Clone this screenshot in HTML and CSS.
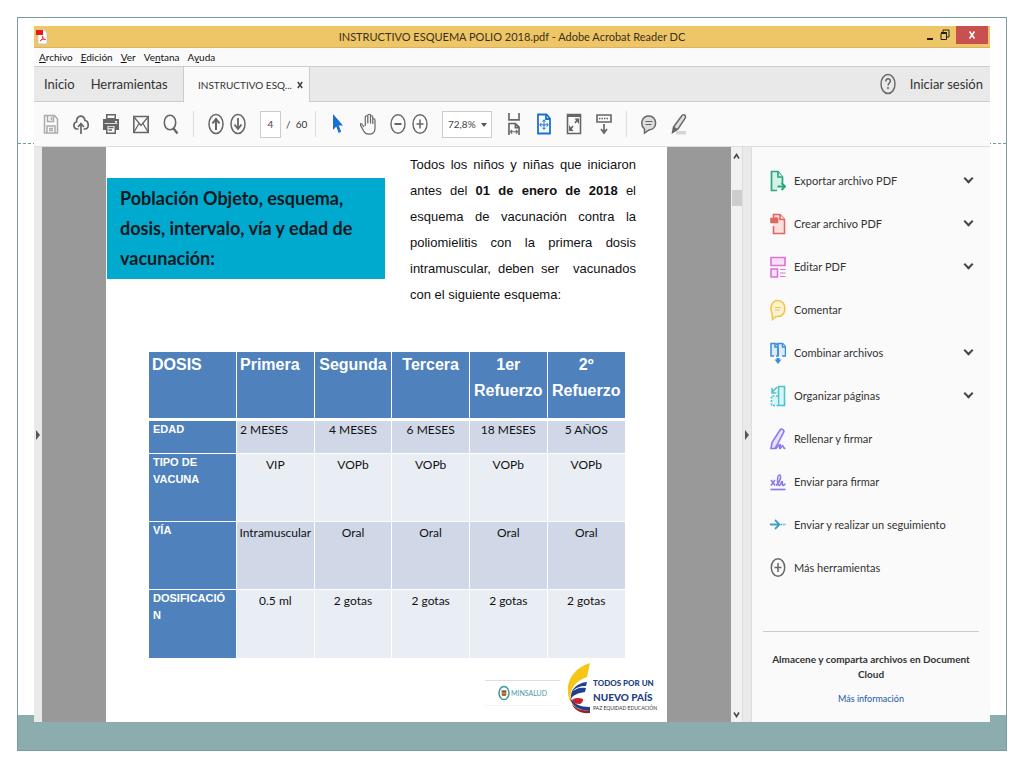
FILE: index.html
```html
<!DOCTYPE html>
<html lang="es">
  <head>
    <meta charset="UTF-8" />
    <meta name="viewport" content="width=device-width, initial-scale=1.0" />
    <title>INSTRUCTIVO ESQUEMA POLIO 2018.pdf - Adobe Acrobat Reader DC</title>
    <link rel="stylesheet" href="styles.css">
  </head>
  <body>
    <div class="slide">
      <div class="app">
        <header class="titlebar">
          <svg class="app-icon" width="12" height="16" viewBox="0 0 12 16">
            <path d="M2 1h7l2 3v11H2z" fill="#fff" stroke="#cfc6b8" stroke-width="1" />
            <path d="M0 1h7v5H0z" fill="#e21b1b" />
            <path d="M4 12c3-2 3-4 2.500-5M6.500 7c0 2 1 3.500 3 3.500M4 12c1-1.500 3-2 5.500-1.500" fill="none" stroke="#e23b3b" />
          </svg>
          <h1>INSTRUCTIVO ESQUEMA POLIO 2018.pdf - Adobe Acrobat Reader DC</h1>
          <div class="window-buttons">
            <button aria-label="Minimizar">
              <svg width="8" height="12" viewBox="0 0 8 12"><path d="M1 9h6v2H1z" fill="#222" /></svg>
            </button>
            <button aria-label="Restaurar">
              <svg width="10" height="12" viewBox="0 0 10 12"><path d="M3 3V1h6v7H7" fill="none" stroke="#222" /><path d="M1 4.500h5.500v6H1z" fill="none" stroke="#222" /><path d="M1 3h6v2H1z" fill="#222" /></svg>
            </button>
            <button class="close" aria-label="Cerrar">
              <svg width="8" height="10" viewBox="0 0 8 10"><path d="M1.500 1.500l5 7M6.500 1.500l-5 7" stroke="#fff" stroke-width="1.500" /></svg>
            </button>
          </div>
        </header>
        <nav class="menubar">
          <a href="#"><u>A</u>rchivo</a>
          <a href="#"><u>E</u>dición</a>
          <a href="#"><u>V</u>er</a>
          <a href="#">Ve<u>n</u>tana</a>
          <a href="#">A<u>y</u>uda</a>
        </nav>
        <div class="tabbar">
          <div class="tabs">
            <button>Inicio</button>
            <button>Herramientas</button>
          </div>
          <div class="doc-tab">
            <span>INSTRUCTIVO ESQ...</span>
            <button aria-label="Cerrar pestaña">
              <svg width="6" height="8" viewBox="0 0 6 8"><path d="M.8 1l4.400 6M5.200 1L.8 7" stroke="#444" stroke-width="1.500" /></svg>
            </button>
          </div>
          <div class="account">
            <button aria-label="Ayuda">
              <svg width="16" height="22" viewBox="0 0 16 22" fill="none" stroke="#666">
                <ellipse cx="8" cy="11" rx="7" ry="9.500" stroke-width="1.400" />
                <path d="M5.800 8.500c0-3.500 4.600-3.500 4.600-.5 0 2-2.300 2-2.300 4.500" stroke-width="1.500" />
                <path d="M8 14v2" stroke-width="1.600" />
              </svg>
            </button>
            <button class="login">Iniciar sesión</button>
          </div>
        </div>
        <div class="toolbar">
          <button aria-label="Guardar">
            <svg viewBox="0 0 16 22" fill="none" stroke="#aaa" stroke-width="1.500">
              <path d="M1.500 2.500h10l3 3.500v14h-13z" /><path d="M4.500 2.500v6h6v-6M4 20v-7h8v7M6 15.500h4M6 17.500h4" /><path d="M8.500 4v3" />
            </svg>
          </button>
          <button aria-label="Subir">
            <svg viewBox="0 0 16 22" fill="none" stroke="#666" stroke-width="1.700">
              <path d="M5.500 16H4C0 16 0 9.500 3.500 9 3.500 2 11 1 12 7.500c4 .5 4.500 8.500 0 8.500h-1.500" /><path d="M8 21v-10M5 14l3-3.500 3 3.500" />
            </svg>
          </button>
          <button aria-label="Imprimir">
            <svg viewBox="0 0 16 22" fill="#666">
              <path d="M3 1h10v5H3z" /><path d="M4.500 2.500h7V5h-7z" fill="#fafafa" /><path d="M0 6h16v11H0z" /><path d="M3 12h10v9H3z" /><path d="M4.500 13h7v6.500h-7z" fill="#fafafa" /><path d="M5.500 14.500h5M5.500 17h3.500" stroke="#666" stroke-width="1.300" /><path d="M1.500 10.500h13" stroke="#fafafa" stroke-width=".8" /><path d="M12 8h2v1.500h-2z" fill="#fff" />
            </svg>
          </button>
          <button aria-label="Correo">
            <svg viewBox="0 0 16 22" fill="none" stroke="#666" stroke-width="1.300">
              <path d="M.8 3.500h14.400v16H.8z" stroke-width="1.600" /><path d="M1 4l7 8.500L15 4M1 19l5-8.500M15 19l-5-8.500" />
            </svg>
          </button>
          <button aria-label="Buscar">
            <svg viewBox="0 0 16 22" fill="none" stroke="#666">
              <ellipse cx="7" cy="9.500" rx="5.700" ry="7.300" stroke-width="1.600" /><path d="M10.500 15.500l4 5" stroke-width="2.300" />
            </svg>
          </button>
          <i class="sep"></i>
          <div class="pair">
            <button aria-label="Página anterior">
              <svg viewBox="0 0 16 22" fill="none" stroke="#666"><ellipse cx="8" cy="11" rx="7" ry="9.500" stroke-width="1.500" /><path d="M8 17V6M4.500 10.500L8 6l3.500 4.500" stroke-width="2" /></svg>
            </button>
            <button aria-label="Página siguiente">
              <svg viewBox="0 0 16 22" fill="none" stroke="#666"><ellipse cx="8" cy="11" rx="7" ry="9.500" stroke-width="1.500" /><path d="M8 5v11M4.500 11.500L8 16l3.500-4.500" stroke-width="1.800" /></svg>
            </button>
          </div>
          <label class="page-box"><input type="text" value="4" aria-label="Página" /> / &nbsp;60</label>
          <i class="sep"></i>
          <button aria-label="Seleccionar">
            <svg viewBox="0 0 16 22"><path d="M3 1v16l3.300-3.500 2.400 6.500 2.500-1.200L8.700 12.500H13z" fill="#1a6fd6" /></svg>
          </button>
          <button aria-label="Mano">
            <svg viewBox="0 0 16 22" fill="none" stroke="#666" stroke-width="1.200">
              <path d="M4 14L1.800 11c-.8-1-2 0-1.300 1.300L4 18.500c1 2 2.500 2.700 5 2.700 4 0 6-2.200 6-6V7c0-1.700-2.200-1.700-2.200 0v4V4c0-1.700-2.300-1.700-2.300 0v6.500V2.500C10.500.8 7.800.8 7.800 2.500v8V4c0-1.700-2.500-1.700-2.500 0v9" />
            </svg>
          </button>
          <div class="pair">
            <button aria-label="Reducir">
              <svg viewBox="0 0 16 22" fill="none" stroke="#666" stroke-width="1.400"><ellipse cx="8" cy="11" rx="7" ry="9.300" /><path d="M4.500 11h7" stroke-width="2" /></svg>
            </button>
            <button aria-label="Ampliar">
              <svg viewBox="0 0 16 22" fill="none" stroke="#666" stroke-width="1.400"><ellipse cx="8" cy="11" rx="7" ry="9.300" /><path d="M4.500 11h7M8 6.500v9" stroke-width="1.500" /></svg>
            </button>
          </div>
          <div class="zoom">
            <select aria-label="Zoom"><option>72,8%</option><option>100%</option></select>
          </div>
          <button aria-label="Ajustar ancho">
            <svg viewBox="0 0 16 24" fill="none" stroke="#666" stroke-width="1.800">
              <path d="M2.500 0v7.500h11V0M2.500 24V11.500h7l4 4V24M9.500 11.500v4.500h4" /><path d="M5 20.500h6M6 18.500l-2 2 2 2M10 18.500l2 2-2 2" stroke-width="1.200" />
            </svg>
          </button>
          <button aria-label="Ajustar página">
            <svg viewBox="0 0 16 22" fill="none" stroke="#1a6fd6" stroke-width="1.800">
              <path d="M2 1.500h8.500l3.500 4v15H2z" /><path d="M10 1.500V6h4" /><path d="M8 7v9M4 11.800h8M6.500 8.500L8 6.800l1.500 1.700M6.500 14.800L8 16.500l1.500-1.700M5.300 10l-1.500 1.800 1.500 1.800M10.700 10l1.500 1.800-1.500 1.800" stroke-width="1" />
            </svg>
          </button>
          <button aria-label="Pantalla completa">
            <svg viewBox="0 0 16 22" fill="none" stroke="#666" stroke-width="1.600">
              <path d="M1.500 1.500h13v19h-13z" /><path d="M1 2.500h14" stroke-width="3" /><path d="M9 10l3-4M7 13l-3 4" /><path d="M8.500 5.500H13V11zM3 12v6h4.500z" fill="#666" stroke="none" />
            </svg>
          </button>
          <button aria-label="Modo de lectura">
            <svg viewBox="0 0 16 22" fill="none" stroke="#666" stroke-width="1.600">
              <path d="M1 2h14v7H1z" /><path d="M3 5.500h10" stroke-dasharray="1.500 1" /><path d="M8 11v8.500M5 16l3 4 3-4" stroke-width="1.700" />
            </svg>
          </button>
          <i class="sep"></i>
          <button aria-label="Comentario">
            <svg viewBox="0 0 16 22" fill="#ddd" stroke="#666" stroke-width="1.500">
              <path d="M3.500 16C-1 12.500 0 3 8 3s9.500 13 0 14l-4.500 3z" /><path d="M4.500 8.500h7M4.500 11.500h6" stroke-width="1.200" />
            </svg>
          </button>
          <button aria-label="Resaltar">
            <svg viewBox="0 0 16 22">
              <path d="M5 18h10v3.500H5z" fill="#d5d5d5" /><path d="M2.500 14L11 2.500c2-2 4.500 0 3 3L7 16l-5.500 3.500z" fill="#ddd" stroke="#666" stroke-width="1.400" /><path d="M2.500 13.500L7 16l-5.500 4z" fill="#666" />
            </svg>
          </button>
        </div>
        <div class="workspace">
          <button class="gutter" aria-label="Mostrar panel de navegación"><i class="arrow"></i></button>
          <main class="viewer">
            <article class="page">
              <div class="intro">
                <h2>Población Objeto, esquema, dosis, intervalo, vía y edad de vacunación:</h2>
                <p>
                  Todos los niños y niñas que iniciaron antes del <b>01 de enero de 2018</b> el esquema de vacunación
                  contra la poliomielitis con la primera dosis intramuscular, deben ser &nbsp;vacunados con el siguiente
                  esquema:
                </p>
              </div>
              <table>
                <thead>
                  <tr>
                    <th class="left">DOSIS</th>
                    <th class="left">Primera</th>
                    <th>Segunda</th>
                    <th>Tercera</th>
                    <th>1er Refuerzo</th>
                    <th>2º Refuerzo</th>
                  </tr>
                </thead>
                <tbody>
                  <tr class="short">
                    <th>EDAD</th>
                    <td class="left">2 MESES</td>
                    <td>4 MESES</td>
                    <td>6 MESES</td>
                    <td>18 MESES</td>
                    <td>5 AÑOS</td>
                  </tr>
                  <tr>
                    <th>TIPO DE<br />VACUNA</th>
                    <td>VIP</td>
                    <td>VOPb</td>
                    <td>VOPb</td>
                    <td>VOPb</td>
                    <td>VOPb</td>
                  </tr>
                  <tr>
                    <th>VÍA</th>
                    <td>Intramuscular</td>
                    <td>Oral</td>
                    <td>Oral</td>
                    <td>Oral</td>
                    <td>Oral</td>
                  </tr>
                  <tr>
                    <th>DOSIFICACIÓ<br />N</th>
                    <td>0.5 ml</td>
                    <td>2 gotas</td>
                    <td>2 gotas</td>
                    <td>2 gotas</td>
                    <td>2 gotas</td>
                  </tr>
                </tbody>
              </table>
              <footer class="logos">
                <div class="minsalud">
                  <svg width="12" height="16" viewBox="0 0 12 16">
                    <ellipse cx="6" cy="8" rx="5" ry="6.500" fill="#fff" stroke="#3a9a9c" stroke-width="1.500" />
                    <path d="M3.500 5h5v4.500c0 2-5 2-5 0z" fill="#c98b3c" />
                    <path d="M4 6h4v1.500H4z" fill="#466c9c" /><path d="M4 9h4v1.500H4z" fill="#b84a3c" />
                  </svg>
                  <span>MINSALUD</span>
                </div>
                <div class="pais">
                  <svg width="24" height="52" viewBox="0 0 24 52">
                    <path d="M23 1C12 4 1 14 1 27c0 6 1 10 3 13C2 29 6 20 20 15c1-5 2-9 3-14z" fill="#f7c516" />
                    <path d="M20 20C10 21 3 27 4 37c2-4 7-6 14-7l1-4c-5-1-9 0-13 3 2-3 7-5 13-5z" fill="#1f3f93" />
                    <path d="M16 37c-5-2-10-1-12 2 1 2 4 3 9 3 2-1 3-2 3-5z" fill="#c8202e" />
                    <path d="M1 27c0 14 7 22 22 24v-3C11 47 3 40 1 27z" fill="#f7c516" />
                    <path d="M3 36c2 8 8 12 20 13v-4C13 45 7 42 3 36z" fill="#1f3f93" />
                    <path d="M5 42c4 5 10 7 18 7v2C14 52 7 48 5 42z" fill="#9a1d36" />
                  </svg>
                  <div class="pais-text">
                    <b>TODOS POR UN</b>
                    <strong>NUEVO PAÍS</strong>
                    <small>PAZ EQUIDAD EDUCACIÓN</small>
                  </div>
                </div>
              </footer>
            </article>
          </main>
          <div class="scrollbar">
            <svg width="7" height="7" viewBox="0 0 7 7"><path d="M1 5.500l2.500-4 2.500 4" fill="none" stroke="#444" stroke-width="1.500" /></svg>
            <i class="thumb"></i>
            <svg width="7" height="7" viewBox="0 0 7 7"><path d="M1 1.500l2.500 4 2.500-4" fill="none" stroke="#444" stroke-width="1.500" /></svg>
          </div>
          <button class="gutter right" aria-label="Ocultar panel de herramientas"><i class="arrow"></i></button>
          <aside class="tools">
            <ul>
              <li><button>
                <svg viewBox="0 0 16 22" fill="#d5f2e6" stroke="#2aa981" stroke-width="1.700"><path d="M7 20.500H1.500v-19H8l4.500 5.500v6" /><path d="M8 1.500V7h4.500" /><path d="M7.500 16.500h7M11.500 13l3.500 3.500-3.500 3.500" fill="none" stroke-width="2" /></svg>
                <span>Exportar archivo PDF</span><i class="chevron"></i>
              </button></li>
              <li><button>
                <svg viewBox="0 0 16 22" fill="#fbe1dd" stroke="#e0675f" stroke-width="1.600"><path d="M3.500 5V1.500H10l4.500 5v14h-11V13" /><path d="M10 1.500v5h4.500" /><path d="M1 5.500h6.500v4H1zM6 8V4" fill="#e0675f" /></svg>
                <span>Crear archivo PDF</span><i class="chevron"></i>
              </button></li>
              <li><button>
                <svg viewBox="0 0 16 22" fill="#f9def8" stroke="#da74d5" stroke-width="1.600"><path d="M1 1.500h14v8H1zM1 13h6.500v8H1z" /><path d="M10 13.500h5.500M10 17h5.500M10 20.500h5.500" stroke-width="1.200" /></svg>
                <span>Editar PDF</span><i class="chevron"></i>
              </button></li>
              <li><button>
                <svg viewBox="0 0 16 22" fill="#fdf2cf" stroke="#eec64f" stroke-width="1.600"><path d="M2 14.500C-1 7 3 1.500 8 1.500c9 0 9.500 16 0 16H6L2.500 20.500z" /><path d="M5 8.500h6M5 11h5" stroke-width="1.100" /></svg>
                <span>Comentar</span>
              </button></li>
              <li><button>
                <svg viewBox="0 0 16 22" fill="#dceafa" stroke="#3c8ddb" stroke-width="1.500"><path d="M4 14H1V1.500h5l2 3V14H6M8 14V1.500h4.500l3 3V14H12" /><path d="M5 1.500V5h3M12.500 1.500V5h3M8 5v9" /><path d="M8 16v2" stroke-width="3" /><path d="M4.500 17.500h7L8 22z" fill="#3c8ddb" stroke="none" /></svg>
                <span>Combinar archivos</span><i class="chevron"></i>
              </button></li>
              <li><button>
                <svg viewBox="0 0 16 22" fill="#d8f5f7" stroke="#4cc3cd" stroke-width="1.600"><path d="M8.500 1.500h6v19h-6z" /><path d="M8 11H1.500v9.500H8" stroke-dasharray="2 1.500" /><path d="M7 2L2.500 7M2 3v5h4.500" fill="none" /></svg>
                <span>Organizar páginas</span><i class="chevron"></i>
              </button></li>
              <li><button>
                <svg viewBox="0 0 16 22" fill="#e6e1fd" stroke="#8c79ee" stroke-width="1.600"><path d="M1 20.500l1-6L10 2c1.500-2 5 0 3.500 2.500L6.500 18l-1.500 2.500z" /><path d="M5 20.500c3 0 3-4 5-4 1 0-1.500 4 0 4s1.500-3 2.500-3 0 3 3 3" fill="none" /></svg>
                <span>Rellenar y firmar</span>
              </button></li>
              <li><button>
                <svg viewBox="0 0 16 22" fill="none" stroke="#8c79ee" stroke-width="1.600"><path d="M1 9l4 5.500M5 9l-4 5.500M6 14.500C10 12 12 4 9.500 4S7 14.500 9 14.500s2-4 3-4-.5 4 1 4 1-2 2.500-1" /><path d="M.5 18.500h15" stroke-width="1.700" /></svg>
                <span>Enviar para firmar</span>
              </button></li>
              <li><button>
                <svg viewBox="0 0 16 22" fill="none" stroke="#3f9fc9" stroke-width="1.800"><path d="M0 10.500h9M5 6l4.500 4.500L5 15" /><path d="M11 10.500h5" stroke-width="1.300" stroke-dasharray="1.300 1" /></svg>
                <span>Enviar y realizar un seguimiento</span>
              </button></li>
              <li><button>
                <svg viewBox="0 0 16 22" fill="none" stroke="#666" stroke-width="1.500"><ellipse cx="8" cy="10.500" rx="6.700" ry="8.800" /><path d="M4.500 10.500h7M8 6v9" /></svg>
                <span>Más herramientas</span>
              </button></li>
            </ul>
            <div class="promo">
              <p>Almacene y comparta archivos en Document Cloud</p>
              <a href="#">Más información</a>
            </div>
          </aside>
        </div>
      </div>
    </div>
  </body>
</html>
```
FILE: styles.css
```css
* {
  box-sizing: border-box;
}
body {
  margin: 0;
  padding: 17px;
  background-color: #fff;
  font-family: Lato, sans-serif;
  font-size: 11px;
  color: #333;
}
button {
  font: inherit;
  color: inherit;
  background: none;
  border: none;
  padding: 0;
  cursor: pointer;
}
svg {
  display: block;
  flex: none;
}
h1,
h2,
p,
ul {
  margin: 0;
  padding: 0;
}
.slide {
  position: relative;
  display: flex;
  min-height: calc(100vh - 34px);
  padding: 8px 16px 28px;
  border: 1px solid #7a9ca1;
  background: linear-gradient(#8badad, #8badad) bottom / 100% 35px no-repeat;
}
.slide::before {
  content: "";
  position: absolute;
  left: 0;
  right: 0;
  top: 125px;
  border-top: 1px dashed #7a9ca1;
}
.app {
  position: relative;
  flex: 1;
  display: flex;
  flex-direction: column;
  background-color: #fafafa;
}

/* title bar and menus */
.titlebar {
  display: flex;
  align-items: center;
  height: 22px;
  padding: 0 2px;
  background-color: #efc667;
  border-bottom: 1px solid #d9b45c;
}
.titlebar h1 {
  flex: 1;
  padding-left: 50px;
  text-align: center;
  font-size: 11px;
  font-weight: normal;
  color: #3a3018;
}
.window-buttons {
  display: flex;
  align-self: flex-start;
  gap: 6px;
}
.window-buttons .close {
  display: flex;
  align-items: center;
  justify-content: center;
  width: 32px;
  height: 18px;
  background-color: #c8504f;
}
.menubar {
  display: flex;
  align-items: center;
  gap: 8px;
  height: 18px;
  padding: 0 5px;
  font-size: 10px;
}
.menubar a {
  color: #111;
  text-decoration: none;
}
.tabbar {
  display: flex;
  height: 36px;
  background-color: #e9e9e9;
  border-top: 1px solid #ccc;
}
.tabs,
.account {
  display: flex;
  align-items: center;
  gap: 16px;
  padding: 0 10px;
  font-size: 13px;
  border-bottom: 1px solid #ccc;
}
.tabs {
  width: 150px;
  border-right: 1px solid #ccc;
}
.account {
  flex: 1;
  justify-content: flex-end;
  gap: 14px;
  padding-right: 7px;
  border-left: 1px solid #ccc;
}
.doc-tab {
  display: flex;
  align-items: center;
  justify-content: space-between;
  width: 125px;
  padding: 0 6px 0 14px;
  background-color: #fafafa;
  font-size: 10px;
  white-space: nowrap;
}

/* toolbar */
.toolbar {
  display: flex;
  align-items: center;
  gap: 14px;
  height: 45px;
  padding: 0 9px;
  border-bottom: 1px solid #ddd;
  font-size: 10px;
}
.toolbar svg {
  width: 16px;
  height: 22px;
}
.toolbar .sep {
  width: 1px;
  height: 26px;
  background-color: #ddd;
}
.pair {
  display: flex;
  gap: 6px;
}
.page-box {
  display: flex;
  align-items: center;
  gap: 5px;
  width: 41px;
  white-space: nowrap;
}
.page-box input,
.zoom select {
  height: 27px;
  border: 1px solid #ccc;
  border-radius: 0;
  background-color: #fff;
  font: inherit;
  color: #444;
}
.page-box input {
  width: 21px;
  padding: 0;
  text-align: center;
}
.zoom {
  position: relative;
}
.zoom select {
  display: block;
  width: 50px;
  padding: 0 5px;
  appearance: none;
}
.zoom::after {
  content: "";
  position: absolute;
  right: 5px;
  top: 12px;
  border: 3px solid transparent;
  border-top: 4px solid #555;
  pointer-events: none;
}

/* document area */
.workspace {
  flex: 1;
  display: flex;
}
.gutter {
  display: flex;
  align-items: center;
  justify-content: center;
  width: 8px;
  background-color: #e9e9e9;
}
.gutter.right {
  width: 10px;
  border-left: 1px solid #ddd;
  border-right: 1px solid #ddd;
}
.arrow {
  border: 5px solid transparent;
  border-left: 4px solid #555;
  border-right: 0;
}
.viewer {
  flex: 1;
  display: flex;
  padding: 0 64px;
  background-color: #999;
}
.page {
  flex: 1;
  display: flex;
  flex-direction: column;
  background-color: #fff;
  color: #111;
}
.intro {
  display: flex;
  align-items: flex-start;
  justify-content: space-between;
  height: 204px;
  padding: 5px 31px 0 1px;
}
.intro h2 {
  width: 278px;
  margin-top: 26px;
  padding: 5px 13px 6px;
  background-color: #00a9ce;
  font-size: 18px;
  line-height: 30px;
  color: #101820;
}
.intro p {
  width: 226px;
  font-family: "Liberation Sans", Arial, sans-serif;
  font-size: 13px;
  line-height: 26px;
  text-align: justify;
}
table {
  table-layout: fixed;
  width: 85%;
  margin-left: 42px;
  border-collapse: collapse;
  font-size: 12px;
}
th,
td {
  height: 68px;
  padding: 1px 2px;
  border-left: 1px solid #fff;
  border-top: 1px solid #fff;
  line-height: 20px;
  text-align: center;
  vertical-align: top;
}
th {
  background-color: #4f81bd;
  font-family: "Liberation Sans", Arial, sans-serif;
  color: #fff;
}
thead th {
  padding: 0;
  border-bottom: 3px solid #fff;
  font-size: 16px;
  line-height: 26px;
}
thead th:first-child {
  width: 88px;
}
tbody th {
  padding: 0 4px;
  font-size: 11px;
  line-height: 17px;
  text-align: left;
}
tbody td {
  background-color: #e9edf4;
}
tbody tr:nth-child(odd) td {
  background-color: #d0d8e8;
}
.short th,
.short td {
  height: 34px;
  padding-top: 0;
  line-height: 17px;
}
th.left,
td.left {
  padding-left: 3px;
  text-align: left;
}
.logos {
  display: flex;
  align-items: center;
  justify-content: flex-end;
  gap: 7px;
  padding: 4px 17px 0;
}
.minsalud {
  display: flex;
  align-items: center;
  justify-content: center;
  gap: 1px;
  width: 75px;
  height: 26px;
  margin-top: 11px;
  border-top: 1px solid #ddd;
  border-bottom: 1px solid #f4f4f4;
  font-size: 7px;
  color: #4d9a9e;
}
.pais {
  display: flex;
  align-items: center;
  gap: 2px;
  color: #1f3f7f;
}
.pais-text {
  display: flex;
  flex-direction: column;
  width: 57px;
  padding-top: 14px;
  white-space: nowrap;
}
.pais-text b {
  font-size: 8px;
  font-weight: 900;
  line-height: 13px;
}
.pais-text strong {
  font-size: 10px;
  font-weight: 900;
  line-height: 14px;
}
.pais-text small {
  font-size: 5px;
  line-height: 8px;
  color: #333;
}
.scrollbar {
  display: flex;
  flex-direction: column;
  align-items: center;
  width: 11px;
  padding: 6px 0 4px;
  background-color: #f1f1f1;
}
.thumb {
  width: 10px;
  height: 16px;
  margin: 30px 0 auto;
  background-color: #cdcdcd;
}

/* tools panel */
.tools {
  width: 238px;
  padding: 12px 11px 0;
}
.tools ul {
  list-style: none;
}
.tools li button {
  display: flex;
  align-items: center;
  gap: 8px;
  width: 100%;
  height: 43px;
  padding: 0 5px 0 7px;
  text-align: left;
}
.tools li svg {
  width: 16px;
  height: 22px;
}
.tools li span {
  flex: 1;
}
.chevron {
  width: 7px;
  height: 7px;
  margin: 0 2px 4px;
  border-right: 2px solid #444;
  border-bottom: 2px solid #444;
  transform: rotate(45deg);
}
.promo {
  margin-top: 42px;
  padding: 20px 4px 0;
  border-top: 1px solid #ccc;
  text-align: center;
  line-height: 15px;
  font-size: 10px;
}
.promo p {
  margin-bottom: 9px;
  font-weight: bold;
}
.promo a {
  font-size: 9px;
  color: #1a56a8;
  text-decoration: none;
}
```
